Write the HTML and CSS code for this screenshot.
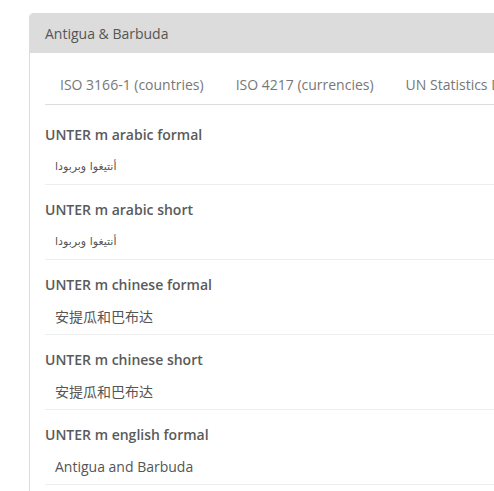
FILE: index.html
```html
<!DOCTYPE html>
<html>
<head>
<meta charset="utf-8">
<link rel="stylesheet" href="styles.css">
</head>
<body>
<div class="page">
  <div class="card">
    <div class="card-header">Antigua &amp; Barbuda</div>
    <div class="card-body">
      <ul class="tabs">
        <li class="tab">ISO 3166-1 (countries)</li>
        <li class="tab">ISO 4217 (currencies)</li>
        <li class="tab">UN Statistics Division</li>
      </ul>
      <div class="rows">
        <div class="row">
          <div class="label">UNTER m arabic formal</div>
          <div class="value arabic"><span dir="rtl">أنتيغوا وبربودا</span></div>
        </div>
        <div class="row">
          <div class="label">UNTER m arabic short</div>
          <div class="value arabic"><span dir="rtl">أنتيغوا وبربودا</span></div>
        </div>
        <div class="row">
          <div class="label">UNTER m chinese formal</div>
          <div class="value">安提瓜和巴布达</div>
        </div>
        <div class="row">
          <div class="label">UNTER m chinese short</div>
          <div class="value">安提瓜和巴布达</div>
        </div>
        <div class="row">
          <div class="label">UNTER m english formal</div>
          <div class="value">Antigua and Barbuda</div>
        </div>
      </div>
    </div>
  </div>
</div>
</body>
</html>
```

FILE: styles.css
```css
html, body {
  margin: 0;
  padding: 0;
  background: #fff;
  overflow: hidden;
}
body {
  font-family: "Open Sans", "Noto Sans CJK SC", sans-serif;
  font-size: 14px;
  line-height: 20px;
  color: #555;
}
.page {
  padding: 13px 0 0 29px;
}
.card {
  width: 700px;
  border: 1px solid #dcdcdc;
  border-radius: 4px 0 0 0;
  overflow: hidden;
}
.card-header {
  background: #dcdcdc;
  padding: 10px 15px 9px;
  color: #555;
}
.card-body {
  padding: 11px 15px 0;
}
.tabs {
  list-style: none;
  margin: 0;
  padding: 0;
  display: flex;
  gap: 2px;
  border-bottom: 1px solid #ddd;
}
.tab {
  padding: 11px 15px 9px;
  color: #777;
  white-space: nowrap;
}
.rows {
  padding-top: 20px;
}
.row {
  border-bottom: 1px solid #eee;
  padding-bottom: 7px;
  margin-bottom: 15px;
}
.label {
  font-weight: 600;
  color: #5a5a5a;
  margin-bottom: 12px;
}
.value {
  padding-left: 10px;
  color: #555;
}
.arabic {
  font-family: "DejaVu Sans", sans-serif;
  font-size: 11px;
}
```
